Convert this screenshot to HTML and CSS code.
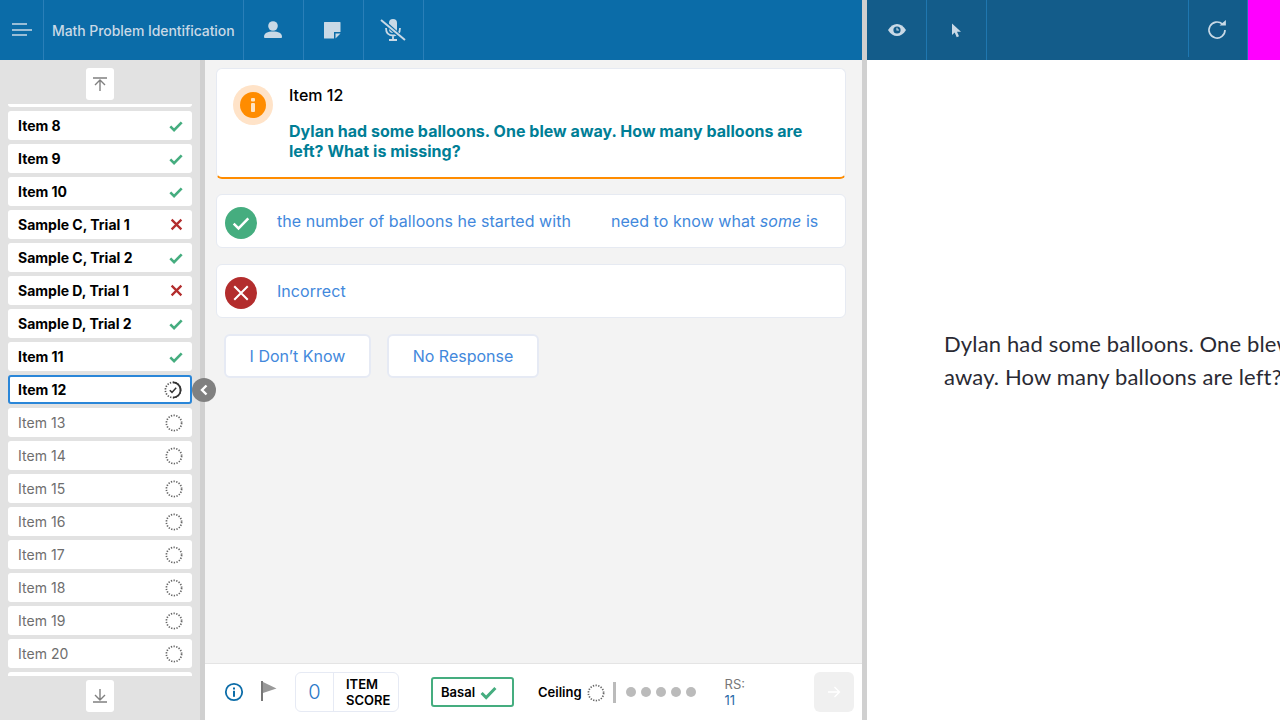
FILE: index.html
```html
<!DOCTYPE html>
<html lang="en">
<head>
    <meta charset="UTF-8">
    <meta name="viewport" content="width=device-width, initial-scale=1.0">
    <title>Math Problem Identification</title>
    <link rel="stylesheet" href="styles.css">
</head>
<body>
    <svg class="icon-defs" aria-hidden="true">
        <symbol id="i-check" viewBox="0 0 16 16"><path d="M1.500 8.500l4.300 4.300 8.700-9" fill="none" stroke="currentColor"/></symbol>
        <symbol id="i-x" viewBox="0 0 16 16"><path d="M2 2l12 12M14 2L2 14" fill="none" stroke="currentColor"/></symbol>
        <symbol id="i-dash" viewBox="0 0 18 18"><circle cx="9" cy="9" r="7.600" fill="none" stroke="#666" stroke-width="1.700" stroke-dasharray="1.300 1.400"/></symbol>
        <symbol id="i-current" viewBox="0 0 18 18"><circle cx="9" cy="9" r="7.600" fill="none" stroke="#555" stroke-width="1.700" stroke-dasharray="1.300 1.400"/><path d="M9 1.400A7.600 7.600 0 0 1 9 16.600" fill="none" stroke="#333" stroke-width="1.700"/><path d="M5.800 9.200l2.200 2.200 4.200-4.600" fill="none" stroke="#333" stroke-width="1.500"/></symbol>
    </svg>

    <div class="app">
        <!-- Left side: examiner view -->
        <div class="examiner">
            <header class="topbar">
                <div class="tool tool-menu">
                    <svg width="20" height="14" viewBox="0 0 20 14"><path d="M0 1h15M0 7h20M0 12h15" stroke="#c9d9e6" stroke-width="1.600"/></svg>
                </div>
                <div class="tool tool-title">Math Problem Identification</div>
                <div class="tool">
                    <svg class="nudge" width="18" height="18" viewBox="0 0 18 18"><circle cx="9" cy="5" r="4.800" fill="#c9d9e6"/><path d="M0 16c0-4 3.500-5.500 9-5.500s9 1.500 9 5.500c0 .8-.5 1-1.500 1h-15C.5 17 0 16.800 0 16z" fill="#c9d9e6"/></svg>
                </div>
                <div class="tool">
                    <svg class="nudge" width="17" height="17" viewBox="0 0 17 17"><path d="M0 .5A.5.5 0 0 1 .5 0h15.500a.5.5 0 0 1 .5.500V10h-6.500v6.500H.5a.5.5 0 0 1-.5-.5z" fill="#c9d9e6"/><path d="M11.500 11.500h5L11.500 16.500z" fill="#c9d9e6"/></svg>
                </div>
                <div class="tool">
                    <svg class="nudge" width="26" height="24" viewBox="0 0 26 24"><rect x="9" y="1" width="8" height="14" rx="4" fill="#c9d9e6"/><path d="M6 10c0 5 3 7.500 7 7.500s7-2.500 7-7.500M13 17.500V21M9 22h8" fill="none" stroke="#c9d9e6" stroke-width="1.800"/><path d="M2 2l22 20" stroke="#0b6ca8" stroke-width="4"/><path d="M1 2l24 20" stroke="#c9d9e6" stroke-width="2"/></svg>
                </div>
            </header>

            <div class="workspace">
                <aside class="sidebar">
                    <button class="scroll-btn">
                        <svg width="14" height="14" viewBox="0 0 14 14"><path d="M0 1h14M7 14V3M2 8l5-5 5 5" fill="none" stroke="#808080" stroke-width="1.400"/></svg>
                    </button>
                    <div class="item-list">
                        <div class="item-scroll">
                            <div class="item done"></div>
                            <div class="item done"><span>Item 8</span><svg class="mark ok"><use href="#i-check"/></svg></div>
                            <div class="item done"><span>Item 9</span><svg class="mark ok"><use href="#i-check"/></svg></div>
                            <div class="item done"><span>Item 10</span><svg class="mark ok"><use href="#i-check"/></svg></div>
                            <div class="item done"><span>Sample C, Trial 1</span><svg class="mark bad"><use href="#i-x"/></svg></div>
                            <div class="item done"><span>Sample C, Trial 2</span><svg class="mark ok"><use href="#i-check"/></svg></div>
                            <div class="item done"><span>Sample D, Trial 1</span><svg class="mark bad"><use href="#i-x"/></svg></div>
                            <div class="item done"><span>Sample D, Trial 2</span><svg class="mark ok"><use href="#i-check"/></svg></div>
                            <div class="item done"><span>Item 11</span><svg class="mark ok"><use href="#i-check"/></svg></div>
                            <div class="item done current"><span>Item 12</span><svg class="status"><use href="#i-current"/></svg></div>
                            <div class="item"><span>Item 13</span><svg class="status"><use href="#i-dash"/></svg></div>
                            <div class="item"><span>Item 14</span><svg class="status"><use href="#i-dash"/></svg></div>
                            <div class="item"><span>Item 15</span><svg class="status"><use href="#i-dash"/></svg></div>
                            <div class="item"><span>Item 16</span><svg class="status"><use href="#i-dash"/></svg></div>
                            <div class="item"><span>Item 17</span><svg class="status"><use href="#i-dash"/></svg></div>
                            <div class="item"><span>Item 18</span><svg class="status"><use href="#i-dash"/></svg></div>
                            <div class="item"><span>Item 19</span><svg class="status"><use href="#i-dash"/></svg></div>
                            <div class="item"><span>Item 20</span><svg class="status"><use href="#i-dash"/></svg></div>
                            <div class="item"></div>
                        </div>
                    </div>
                    <button class="scroll-btn">
                        <svg width="14" height="14" viewBox="0 0 14 14"><path d="M0 13h14M7 0v11M2 6l5 5 5-5" fill="none" stroke="#808080" stroke-width="1.400"/></svg>
                    </button>
                    <div class="collapse-handle">
                        <svg width="10" height="12" viewBox="0 0 10 12"><path d="M7.500 1.500L3 6l4.500 4.500" fill="none" stroke="#fff" stroke-width="2.400"/></svg>
                    </div>
                </aside>

                <main class="main">
                    <div class="content">
                        <section class="question-card">
                            <div class="info-ring">
                                <div class="info-dot">
                                    <svg width="6" height="14" viewBox="0 0 6 14"><rect x="1" y="0" width="4" height="3.500" rx="1" fill="#ffe3c2"/><rect x="1" y="5" width="4" height="9" rx="1" fill="#ffe3c2"/></svg>
                                </div>
                            </div>
                            <div class="question-text">
                                <h3>Item 12</h3>
                                <p>Dylan had some balloons. One blew away. How many balloons are left? What is missing?</p>
                            </div>
                        </section>

                        <section class="answer-row">
                            <div class="answer-icon correct"><svg width="18" height="18"><use href="#i-check"/></svg></div>
                            <div class="answer-texts">
                                <span>the number of balloons he started with</span>
                                <span>need to know what <em>some</em> is</span>
                            </div>
                        </section>

                        <section class="answer-row">
                            <div class="answer-icon incorrect"><svg width="18" height="18"><use href="#i-x"/></svg></div>
                            <div class="answer-texts">
                                <span>Incorrect</span>
                            </div>
                        </section>

                        <div class="answer-buttons">
                            <button class="plain-btn btn-idk">I Don’t Know</button>
                            <button class="plain-btn btn-nr">No Response</button>
                        </div>
                    </div>

                    <footer class="footer">
                        <svg class="foot-info" width="20" height="20" viewBox="0 0 20 20"><circle cx="10" cy="10" r="8.200" fill="none" stroke="#0b6ca8" stroke-width="1.800"/><rect x="9" y="5.500" width="2" height="2" fill="#0b6ca8"/><rect x="9" y="8.800" width="2" height="6" fill="#0b6ca8"/></svg>
                        <svg class="foot-flag" width="16" height="20" viewBox="0 0 16 20"><path d="M0 0h2v20H0z" fill="#777"/><path d="M2 1l13.500 6.500L2 12z" fill="#999"/></svg>
                        <div class="score-box">
                            <div class="score-value">0</div>
                            <div class="score-label">ITEM<br>SCORE</div>
                        </div>
                        <div class="basal">Basal <svg class="mark-lg"><use href="#i-check"/></svg></div>
                        <div class="ceiling">Ceiling <svg class="status"><use href="#i-dash"/></svg></div>
                        <div class="bar-sep"></div>
                        <div class="dots"><i></i><i></i><i></i><i></i><i></i></div>
                        <div class="raw-score">RS:<br><span>11</span></div>
                        <button class="next-btn">
                            <svg width="14" height="14" viewBox="0 0 14 14"><path d="M1 7h11.500M7.500 2l5 5-5 5" fill="none" stroke="#fff" stroke-width="1.400"/></svg>
                        </button>
                    </footer>
                </main>
            </div>
        </div>

        <div class="pane-divider"></div>

        <!-- Right side: student view -->
        <div class="student">
            <header class="student-bar">
                <div class="tool tool-student">
                    <svg width="20" height="14" viewBox="0 0 20 14"><path d="M1 7c2.500-4 5.500-6 9-6s6.500 2 9 6c-2.500 4-5.500 6-9 6s-6.500-2-9-6z" fill="#c9d9e6"/><circle cx="10" cy="7" r="3.600" fill="#135c8a"/><path d="M10 4.800V7h2" fill="none" stroke="#c9d9e6" stroke-width="1.100"/></svg>
                </div>
                <div class="tool tool-student">
                    <svg width="11" height="15" viewBox="0 0 11 15"><path d="M1 .5v11.500l2.700-2.400 2 4.700 2.300-1-2-4.500h4z" fill="#c9d9e6"/></svg>
                </div>
                <div class="student-spacer"></div>
                <div class="tool tool-reload">
                    <svg class="nudge" width="20" height="20" viewBox="0 0 20 20"><path d="M15.500 4.200A8 8 0 1 0 18 10" fill="none" stroke="#c9d9e6" stroke-width="1.700"/><path d="M12.500 5.400h6.400V0z" fill="#c9d9e6"/></svg>
                </div>
                <div class="magenta"></div>
            </header>
            <div class="reading">
                <p>Dylan had some balloons. One blew away. How many balloons are left?</p>
            </div>
        </div>
    </div>
</body>
</html>
```

FILE: styles.css
```css
* {
    box-sizing: border-box;
}

body {
    margin: 0;
    font-family: Inter, "Liberation Sans", sans-serif;
    color: #000;
    background-color: #fff;
}

.icon-defs {
    position: absolute;
    width: 0;
    height: 0;
}

.app {
    display: flex;
    width: 1280px;
    height: 720px;
    overflow: hidden;
}

.examiner {
    width: 862px;
    display: flex;
    flex-direction: column;
}

.pane-divider {
    width: 5px;
    background-color: #d0d0d0;
}

.student {
    flex: 1;
    min-width: 0;
    display: flex;
    flex-direction: column;
}

/* top bars */
.topbar {
    height: 60px;
    display: flex;
    background-color: #0b6ca8;
}

.tool {
    width: 60px;
    height: 60px;
    display: flex;
    align-items: center;
    justify-content: center;
    border-right: 1px solid #2a7fb8;
}

.nudge {
    margin-right: 2px;
}

.tool-menu {
    width: 44px;
    padding-left: 12px;
    justify-content: flex-start;
}

.tool-title {
    width: 200px;
    padding-left: 8px;
    justify-content: flex-start;
    font-size: 14px;
    font-weight: 500;
    letter-spacing: -0.07px;
    color: #c9d9e6;
    white-space: nowrap;
}

.student-bar {
    height: 60px;
    display: flex;
    background-color: #135c8a;
}

.tool-student {
    border-right-color: #1f77b0;
}

.student-spacer {
    flex: 1;
    border-right: 1px solid #1f77b0;
    margin-bottom: 3px;
}

.tool-reload {
    width: 59px;
    border-right-color: #1f77b0;
}

.magenta {
    width: 32px;
    background-color: #ff00ff;
}

.workspace {
    flex: 1;
    min-height: 0;
    display: flex;
}

/* item list */
.sidebar {
    position: relative;
    width: 205px;
    padding: 8px;
    display: flex;
    flex-direction: column;
    align-items: center;
    background-color: #e2e2e2;
    border-right: 5px solid #d0d0d0;
}

.scroll-btn {
    width: 28px;
    height: 32px;
    padding: 0;
    border: none;
    border-radius: 3px;
    background-color: #fff;
    display: flex;
    align-items: center;
    justify-content: center;
}

.item-list {
    width: 184px;
    height: 572px;
    margin: 4px 0;
    overflow: hidden;
}

.item-scroll {
    margin-top: -26px;
    display: flex;
    flex-direction: column;
    gap: 4px;
}

.item {
    height: 29px;
    flex-shrink: 0;
    padding: 0 8px 0 10px;
    display: flex;
    align-items: center;
    justify-content: space-between;
    background-color: #fff;
    border-radius: 3px;
    font-size: 14px;
    letter-spacing: 0.05px;
    color: #6e6e6e;
}

.item.done {
    font-weight: 700;
    letter-spacing: 0;
    color: #000;
}

.item.current {
    border: 2px solid #2a86d8;
    padding: 0 7px 0 8px;
}

.mark {
    width: 14px;
    height: 14px;
    margin-right: 1px;
}

.mark.ok {
    color: #45ad7f;
    stroke-width: 3;
}

.mark.bad {
    color: #b32d2d;
    width: 13px;
    height: 13px;
    stroke-width: 2.800;
}

.status {
    width: 18px;
    height: 18px;
    margin-right: 1px;
}

.collapse-handle {
    position: absolute;
    left: 192px;
    top: 318px;
    width: 24px;
    height: 24px;
    border-radius: 50%;
    background-color: #808080;
    display: flex;
    align-items: center;
    justify-content: center;
}

/* question area */
.main {
    flex: 1;
    min-width: 0;
    display: flex;
    flex-direction: column;
    background-color: #f3f3f3;
}

.content {
    flex: 1;
    padding: 8px 16px 0 11px;
}

.question-card {
    height: 111px;
    padding: 16px 16px 0 16px;
    display: flex;
    gap: 16px;
    background-color: #fff;
    border: 1px solid #e6eaf2;
    border-bottom: 2px solid #ff8c00;
    border-radius: 6px;
}

.info-ring {
    width: 40px;
    height: 40px;
    flex-shrink: 0;
    border-radius: 50%;
    background-color: #ffe3c8;
    display: flex;
    align-items: center;
    justify-content: center;
}

.info-dot {
    width: 26px;
    height: 26px;
    border-radius: 50%;
    background-color: #ff8c00;
    display: flex;
    align-items: center;
    justify-content: center;
}

.question-text h3 {
    margin: 0 0 16px;
    font-size: 16px;
    line-height: 20px;
    font-weight: 500;
}

.question-text p {
    margin: 0;
    font-size: 16px;
    line-height: 20px;
    font-weight: 700;
    letter-spacing: 0.03px;
    color: #007e96;
}

.answer-row {
    height: 54px;
    margin-top: 16px;
    padding: 4px 8px 0 8px;
    display: flex;
    gap: 20px;
    background-color: #fff;
    border: 1px solid #e6eaf2;
    border-radius: 6px;
}

.question-card + .answer-row {
    margin-top: 15px;
}

.answer-icon {
    width: 32px;
    height: 32px;
    margin-top: 8px;
    border-radius: 50%;
    color: #fff;
    display: flex;
    align-items: center;
    justify-content: center;
    flex-shrink: 0;
    stroke-width: 2.200;
}

.answer-icon.correct {
    background-color: #45ad7f;
}

.answer-icon.incorrect {
    background-color: #b32d2d;
    stroke-width: 1.800;
}

.answer-texts {
    padding-top: 12px;
    display: flex;
    gap: 40px;
    font-size: 16px;
    line-height: 20px;
    letter-spacing: 0.05px;
    color: #4288dc;
    white-space: nowrap;
}

.answer-buttons {
    margin-top: 16px;
    padding-left: 8px;
    display: flex;
    gap: 16px;
}

.plain-btn {
    height: 44px;
    padding: 0;
    background-color: #fff;
    border: 2px solid #e6eaf4;
    border-radius: 6px;
    font-family: inherit;
    font-size: 16px;
    color: #4288dc;
}

.btn-idk {
    width: 147px;
}

.btn-nr {
    width: 152px;
}

/* footer */
.footer {
    height: 57px;
    padding-left: 19px;
    display: flex;
    align-items: center;
    background-color: #fff;
    border-top: 1px solid #e4e4e4;
}

.foot-info {
    flex-shrink: 0;
    margin-top: -1px;
}

.foot-flag {
    flex-shrink: 0;
    margin-left: 17px;
    margin-top: -2px;
}

.score-box {
    width: 104px;
    height: 40px;
    margin-left: 18px;
    display: flex;
    align-items: center;
    background-color: #fff;
    border: 1px solid #e6eaf4;
    border-radius: 6px;
}

.score-value {
    width: 38px;
    height: 100%;
    display: flex;
    align-items: center;
    justify-content: center;
    border-right: 1px solid #e6eaf4;
    font-size: 20px;
    font-weight: 300;
    color: #2a78c8;
}

.score-label {
    padding: 0 0 0 12px;
    font-size: 13px;
    line-height: 16px;
    font-weight: 600;
}

.basal {
    width: 83px;
    height: 30px;
    margin-left: 32px;
    padding-left: 8px;
    display: flex;
    align-items: center;
    gap: 5px;
    border: 2px solid #45ad7f;
    border-radius: 3px;
    font-size: 13px;
    font-weight: 600;
}

.mark-lg {
    width: 17px;
    height: 17px;
    color: #45ad7f;
    stroke-width: 2.800;
}

.ceiling {
    margin-left: 24px;
    display: flex;
    align-items: center;
    gap: 5px;
    font-size: 13px;
    font-weight: 600;
}

.ceiling .status {
    margin: 2px 0 0;
}

.bar-sep {
    width: 3px;
    height: 21px;
    margin-left: 8px;
    background-color: #bbb;
}

.dots {
    margin-left: 10px;
    display: flex;
    gap: 5px;
}

.dots i {
    width: 10px;
    height: 10px;
    border-radius: 50%;
    background-color: #bbb;
}

.raw-score {
    width: 89px;
    margin-left: 29px;
    font-size: 13px;
    line-height: 16px;
    color: #777;
}

.raw-score span {
    color: #2a6aa8;
}

.next-btn {
    width: 40px;
    height: 40px;
    padding: 0;
    border: none;
    border-radius: 6px;
    background-color: #f0f0f0;
    display: flex;
    align-items: center;
    justify-content: center;
}

/* student reading pane */
.reading {
    flex: 1;
    padding: 267px 0 0 77px;
    background-color: #fff;
    overflow: hidden;
}

.reading p {
    width: 350px;
    margin: 0;
    font-family: Lato, "Noto Sans", sans-serif;
    font-size: 22px;
    line-height: 33px;
    letter-spacing: 0.15px;
    color: #2a2a33;
}
```
